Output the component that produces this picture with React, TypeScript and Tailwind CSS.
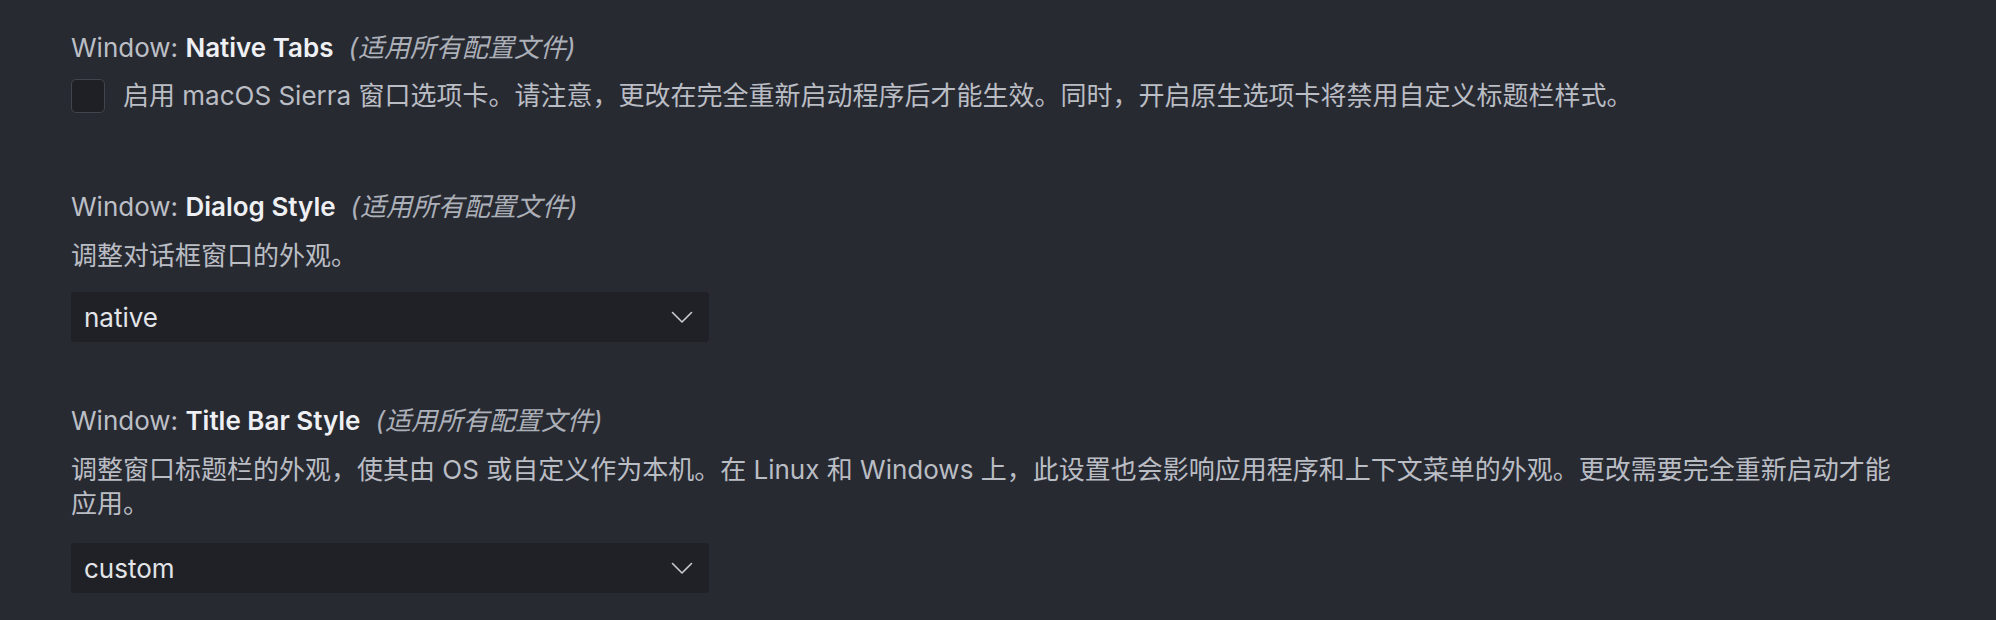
import React from "react";

const font = { fontFamily: 'Inter, "Noto Sans CJK SC", "Noto Sans", sans-serif' };

function Title({ cat, name }: { cat: string; name: string }) {
  return (
    <div className="h-[34px] leading-[34px] text-[26px] whitespace-nowrap">
      <span className="text-[#bcbfc6]">{cat}: </span>
      <span className="font-semibold text-[#eef0f3]">{name}</span>
      <span className="ml-[15px] italic text-[#acb0b8]">(适用所有配置文件)</span>
    </div>
  );
}

function Chevron() {
  return (
    <svg width="22" height="13" viewBox="0 0 22 13" fill="none" className="shrink-0">
      <polyline points="1.5,1.5 11,11 20.5,1.5" stroke="#c9ccd2" strokeWidth="1.6" strokeLinecap="round" strokeLinejoin="round" />
    </svg>
  );
}

function Select({ value }: { value: string }) {
  return (
    <div className="w-[638px] h-[50px] rounded-[4px] bg-[#1f2127] flex items-center justify-between pl-[13px] pr-[16px] text-[26px] text-[#e2e4e8]">
      <span>{value}</span>
      <Chevron />
    </div>
  );
}

export default function App() {
  return (
    <div className="w-[1996px] h-[620px] bg-[#282a32] overflow-hidden pl-[71px] pt-[31px]" style={font}>
      <div>
        <Title cat="Window" name="Native Tabs" />
        <div className="mt-[14px] flex items-center gap-[18px]">
          <div className="w-[34px] h-[34px] rounded-[5px] border-[1.5px] border-[#42454e] bg-[#1e2026] shrink-0" />
          <div className="text-[26px] leading-[34px] text-[#babdc4]">
            启用 macOS Sierra 窗口选项卡。请注意，更改在完全重新启动程序后才能生效。同时，开启原生选项卡将禁用自定义标题栏样式。
          </div>
        </div>
      </div>

      <div className="mt-[77px]">
        <Title cat="Window" name="Dialog Style" />
        <div className="mt-[15px] text-[26px] leading-[34px] text-[#babdc4]">调整对话框窗口的外观。</div>
        <div className="mt-[19px]">
          <Select value="native" />
        </div>
      </div>

      <div className="mt-[62px]">
        <Title cat="Window" name="Title Bar Style" />
        <div className="mt-[15px] w-[1830px] text-[26px] leading-[34px] text-[#babdc4]">
          调整窗口标题栏的外观，使其由 OS 或自定义作为本机。在 Linux 和 Windows 上，此设置也会影响应用程序和上下文菜单的外观。更改需要完全重新启动才能应用。
        </div>
        <div className="mt-[22px]">
          <Select value="custom" />
        </div>
      </div>
    </div>
  );
}
